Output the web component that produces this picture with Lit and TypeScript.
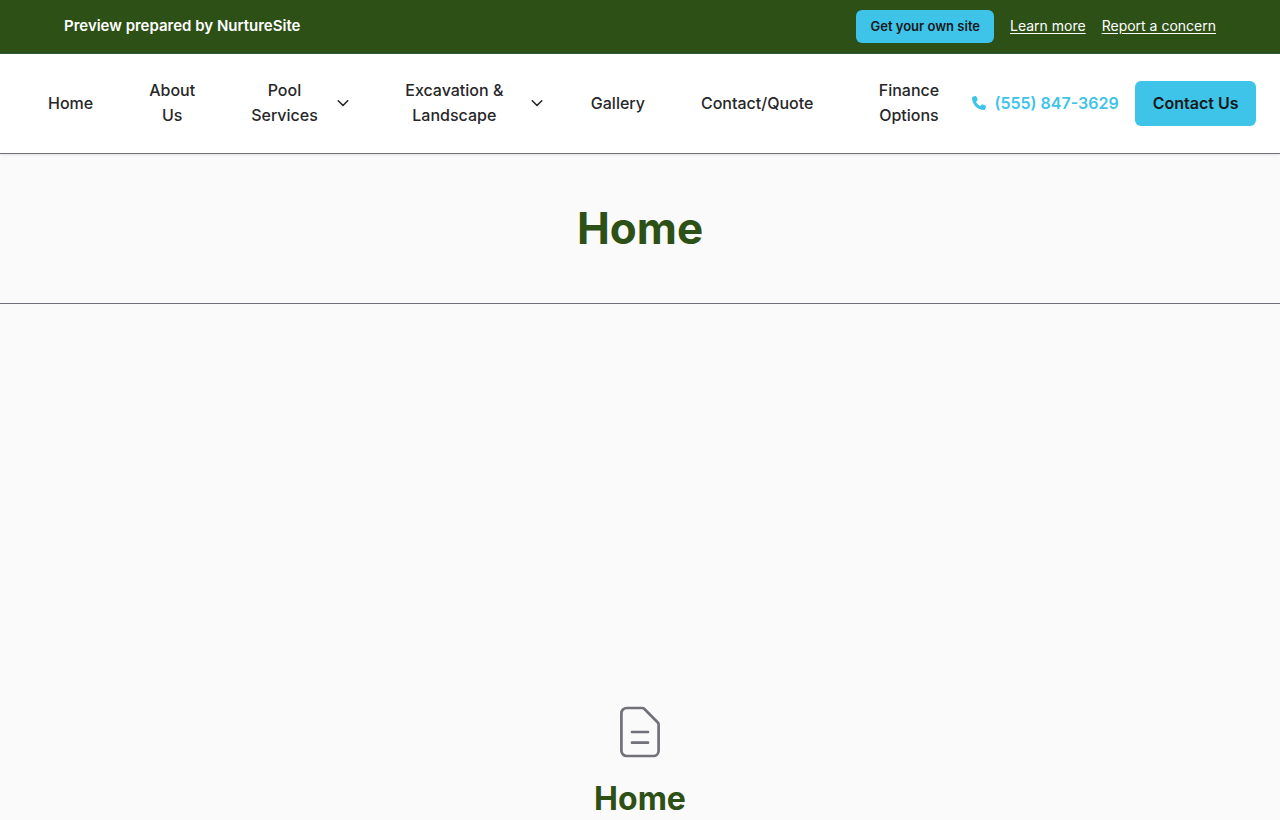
import { LitElement, html, css, nothing } from "lit";
import { customElement } from "lit/decorators.js";

interface NavEntry {
  label: string;
  kind?: string;
  menu?: boolean;
}

const NAV: NavEntry[] = [
  { label: "Home" },
  { label: "About Us", kind: "narrow" },
  { label: "Pool Services", kind: "narrow", menu: true },
  { label: "Excavation & Landscape", kind: "broad", menu: true },
  { label: "Gallery" },
  { label: "Contact/Quote" },
  { label: "Finance Options", kind: "medium" },
];

@customElement("app-root")
export class AppRoot extends LitElement {
  static styles = css`
    :host {
      display: block;
      min-height: 100vh;
      background: #fafafa;
      color: #27272a;
      font-family: Inter, "Liberation Sans", sans-serif;
      font-size: 16px;
      line-height: 25px;
    }
    * {
      box-sizing: border-box;
    }
    a {
      color: inherit;
      text-decoration: none;
    }
    button {
      border: 0;
      border-radius: 6px;
      background: #3dc4e8;
      color: #18181b;
      font-family: inherit;
      cursor: pointer;
    }
    .preview {
      display: flex;
      align-items: baseline;
      justify-content: space-between;
      padding: 10px 64px;
      background: #2d5016;
      border-bottom: 1px solid #2f5d3a;
      color: #fff;
    }
    .preview-title {
      margin: 0;
      font-size: 15px;
      font-weight: 600;
    }
    .preview-actions {
      display: flex;
      align-items: baseline;
      gap: 16px;
      font-size: 14px;
    }
    .preview-actions a {
      text-decoration: underline;
      text-underline-offset: 2px;
    }
    .own-site {
      padding: 8px 14px;
      font-size: 13px;
      line-height: 17px;
      font-weight: 600;
    }
    .header {
      display: flex;
      align-items: center;
      justify-content: space-between;
      padding: 24px 24px 25px;
      background: #fff;
      border-bottom: 1px solid #71717a;
      box-shadow: 0 1px 3px rgba(0, 0, 0, 0.1);
    }
    .menu {
      display: flex;
      align-items: center;
      gap: 8px;
      margin: 0;
      padding: 0;
      list-style: none;
      font-weight: 500;
      text-align: center;
    }
    .item {
      display: flex;
      align-items: center;
      gap: 19px;
      padding: 0 24px;
    }
    .narrow .label {
      display: block;
      width: min-content;
    }
    .broad {
      gap: 27px;
      padding-right: 16px;
    }
    .broad .label {
      display: block;
      width: 99px;
    }
    .medium .label {
      display: block;
      width: 79px;
    }
    .chevron {
      display: block;
      width: 12px;
      height: 12px;
    }
    .contact {
      display: flex;
      align-items: center;
      gap: 16px;
      white-space: nowrap;
      font-weight: 600;
    }
    .phone {
      display: flex;
      align-items: center;
      gap: 8px;
      color: #3dc4e8;
    }
    .phone-icon {
      width: 14px;
      height: 14px;
    }
    .contact-button {
      padding: 10px 18px;
      font-size: 16px;
      line-height: 25px;
      font-weight: 600;
    }
    .hero {
      padding: 48px 24px;
      border-bottom: 1px solid #71717a;
      text-align: center;
    }
    h1,
    h2 {
      margin: 0;
      color: #2d5016;
      font-weight: 700;
    }
    h1 {
      font-size: 44px;
      line-height: 53px;
    }
    .empty {
      display: flex;
      flex-direction: column;
      align-items: center;
      gap: 16px;
      padding: 396px 24px 0;
    }
    .page-icon {
      width: 64px;
      height: 64px;
      color: #71717a;
    }
    h2 {
      font-size: 32px;
      line-height: 38px;
    }
  `;

  private renderItem(entry: NavEntry) {
    return html`<li class="item ${entry.kind ?? ""}">
      <a class="label" href="#">${entry.label}</a>
      ${entry.menu
        ? html`<svg class="chevron" viewBox="0 0 12 12" fill="none" stroke="currentColor" stroke-width="1.6" stroke-linecap="round" stroke-linejoin="round" aria-hidden="true">
            <path d="M1.3 3.8 6 8.500l4.700-4.700" />
          </svg>`
        : nothing}
    </li>`;
  }

  render() {
    return html`
      <aside class="preview">
        <p class="preview-title">Preview prepared by NurtureSite</p>
        <div class="preview-actions">
          <button class="own-site" type="button">Get your own site</button>
          <a href="#">Learn more</a>
          <a href="#">Report a concern</a>
        </div>
      </aside>
      <header class="header">
        <nav aria-label="Main">
          <ul class="menu">
            ${NAV.map((entry) => this.renderItem(entry))}
          </ul>
        </nav>
        <div class="contact">
          <a class="phone" href="tel:5558473629">
            <svg class="phone-icon" viewBox="0 0 512 512" fill="currentColor" aria-hidden="true">
              <path d="M164.900 24.600c-7.700-18.600-28-28.500-47.400-23.200l-88 24C12.100 30.200 0 46 0 64c0 247.400 200.600 448 448 448 18 0 33.800-12.100 38.600-29.500l24-88c5.300-19.400-4.600-39.700-23.200-47.400l-96-40c-16.300-6.800-35.200-2.100-46.300 11.600L304.700 368C234.300 334.700 177.300 277.700 144 207.300L193.300 167c13.700-11.200 18.400-30 11.600-46.300z" />
            </svg>
            <span>(555) 847-3629</span>
          </a>
          <button class="contact-button" type="button">Contact Us</button>
        </div>
      </header>
      <main>
        <section class="hero"><h1>Home</h1></section>
        <section class="empty">
          <svg class="page-icon" viewBox="0 0 64 64" fill="none" stroke="currentColor" stroke-width="2.7" stroke-linecap="round" stroke-linejoin="round" aria-hidden="true">
            <path d="M18.700 56h26.600a5.300 5.300 0 0 0 5.300-5.300V24.400a2.700 2.700 0 0 0-.8-1.900L36.200 8.800a2.700 2.700 0 0 0-1.900-.8H18.700a5.300 5.300 0 0 0-5.300 5.300v37.400a5.300 5.300 0 0 0 5.300 5.300z" />
            <path d="M24 32h16M24 42.700h16" />
          </svg>
          <h2>Home</h2>
        </section>
      </main>
    `;
  }
}
